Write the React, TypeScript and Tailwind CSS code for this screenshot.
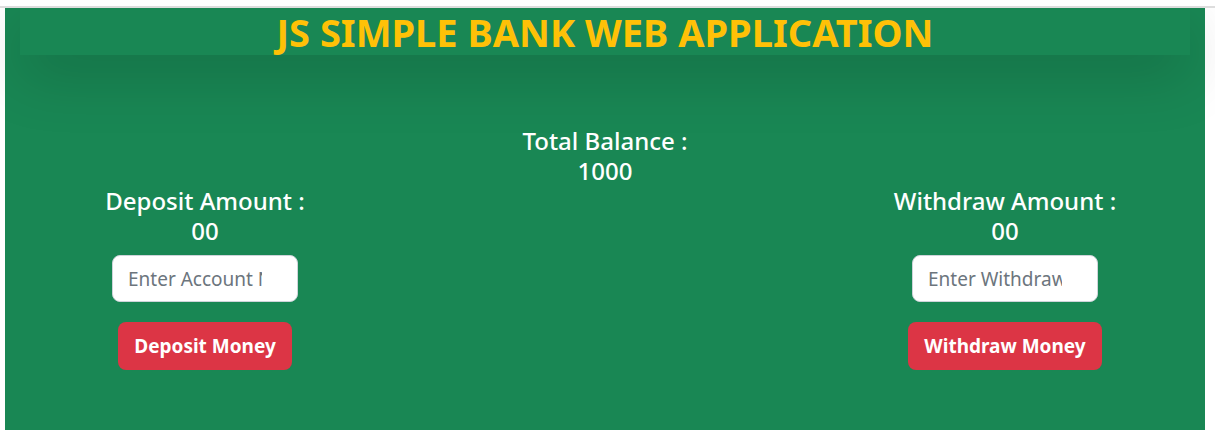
import { useState } from 'react';

type PanelProps = {
  id: string;
  title: string;
  amount: string;
  placeholder: string;
  action: string;
  onSubmit: (value: number) => void;
};

function AmountPanel({ id, title, amount, placeholder, action, onSubmit }: PanelProps) {
  const [value, setValue] = useState('');

  return (
    <form
      className="flex flex-col items-center"
      onSubmit={(event) => {
        event.preventDefault();
        const parsed = Number(value);
        if (parsed > 0) onSubmit(parsed);
        setValue('');
      }}
    >
      <label htmlFor={id} className="whitespace-nowrap text-[24px] leading-[30px] font-medium">
        {title}
      </label>
      <output htmlFor={id} className="text-[24px] leading-[30px] font-medium">
        {amount}
      </output>
      <div className="mt-[9px] w-[186px] rounded-lg border border-[#ced4da] bg-white px-[15px] pt-[9px] pb-[7px]">
        <input
          id={id}
          type="text"
          value={value}
          onChange={(event) => setValue(event.target.value)}
          placeholder={placeholder}
          className="block w-[134px] bg-transparent text-[19px] leading-[29px] text-[#212529] outline-none placeholder:text-[#6c757d]"
        />
      </div>
      <button
        type="submit"
        className="mt-5 rounded-lg bg-[#dc3545] px-4 py-[9px] text-[19px] leading-[30px] font-bold whitespace-nowrap text-white"
      >
        {action}
      </button>
    </form>
  );
}

const pad = (value: number) => (value === 0 ? '00' : String(value));

export default function App() {
  const [deposit, setDeposit] = useState(0);
  const [withdraw, setWithdraw] = useState(0);

  return (
    <div className="bg-white font-['Noto_Sans',sans-serif]">
      <div className="relative z-10 h-2 border-b-2 border-[#dddddd] bg-white" />
      <div className="pr-2.5 pb-3 pl-[5px]">
        <main className="bg-[#198754] px-[15px] pb-[60px] text-white">
          <header className="bg-[#198754] shadow-[0_20px_60px_rgba(0,0,0,0.175)]">
            <h1 className="pt-px text-center text-[38px] leading-[46px] font-bold text-[#ffc107]">
              JS SIMPLE BANK WEB APPLICATION
            </h1>
          </header>
          <section className="relative mt-[71px] text-center text-[24px] leading-[30px] font-medium">
            <h2>Total Balance :</h2>
            <p>{1000 + deposit - withdraw}</p>
          </section>
          <div className="-mx-[15px] grid grid-cols-3">
            <AmountPanel
              id="deposit"
              title="Deposit Amount :"
              amount={pad(deposit)}
              placeholder="Enter Account Number"
              action="Deposit Money"
              onSubmit={(value) => setDeposit(deposit + value)}
            />
            <div className="col-start-3">
              <AmountPanel
                id="withdraw"
                title="Withdraw Amount :"
                amount={pad(withdraw)}
                placeholder="Enter Withdraw Amount"
                action="Withdraw Money"
                onSubmit={(value) => setWithdraw(withdraw + value)}
              />
            </div>
          </div>
        </main>
      </div>
    </div>
  );
}
